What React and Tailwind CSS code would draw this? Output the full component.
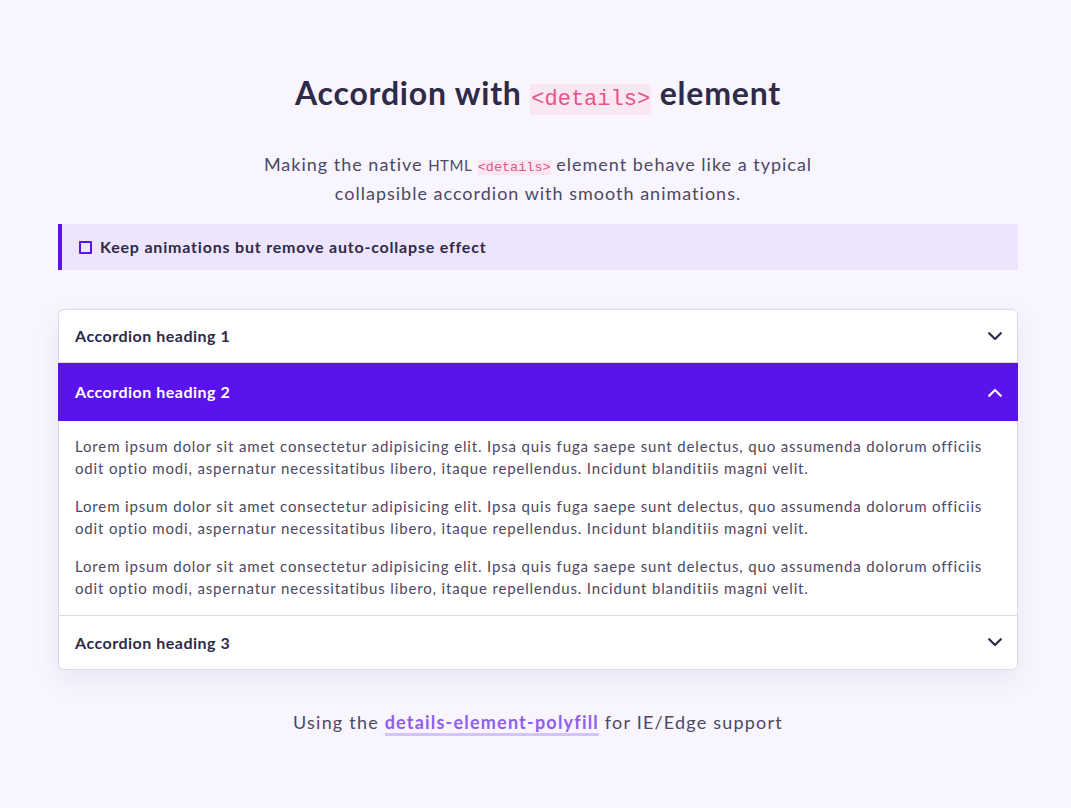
import { useState } from "react";

const lorem =
  "Lorem ipsum dolor sit amet consectetur adipisicing elit. Ipsa quis fuga saepe sunt delectus, quo assumenda dolorum officiis odit optio modi, aspernatur necessitatibus libero, itaque repellendus. Incidunt blanditiis magni velit.";

function Code({ children, className = "" }) {
  return (
    <code
      className={`bg-[#f9e7f1] text-[#e8538a] font-['Liberation_Mono','DejaVu_Sans_Mono',monospace] font-normal tracking-normal leading-none ${className}`}
    >
      {children}
    </code>
  );
}

function Chevron({ up }) {
  return (
    <svg width="14" height="9" viewBox="0 0 14 9" fill="none" className="shrink-0">
      <path
        d={up ? "M1.2 7.8 L7 2 L12.8 7.8" : "M1.2 1.2 L7 7 L12.8 1.2"}
        stroke="currentColor"
        strokeWidth="2.2"
        strokeLinecap="round"
        strokeLinejoin="round"
      />
    </svg>
  );
}

function Item({ title, open, onToggle, last }) {
  return (
    <div className={last ? "" : "border-b border-[#dcd8e6]"}>
      <button
        onClick={onToggle}
        className={`flex items-center justify-between text-left text-[16px] tracking-[0.5px] font-bold ${
          open
            ? "bg-[#5b13ec] text-white h-[58px] -mx-px w-[calc(100%+2px)] pl-[17px] pr-[16px]"
            : `w-full pl-4 pr-[15px] text-[#2e2a47] ${last ? "h-[53px]" : "h-[52px]"}`
        }`}
      >
        <span>{title}</span>
        <Chevron up={open} />
      </button>
      {open && (
        <div className="px-4 pt-[14px] pb-4 text-[15px] leading-[22px] tracking-[0.85px] text-[#4d4863] space-y-4">
          <p>{lorem}</p>
          <p>{lorem}</p>
          <p>{lorem}</p>
        </div>
      )}
    </div>
  );
}

export default function App() {
  const [openIdx, setOpenIdx] = useState(1);
  const [keep, setKeep] = useState(false);

  return (
    <div className="min-h-screen bg-[#f8f5fe] font-['Lato',sans-serif] text-[#2e2a47]">
      <div className="w-[960px] ml-[58px] pt-[72px] pb-16">
        <h1 className="text-center text-[32px] tracking-[0.8px] font-bold leading-[42px]">
          Accordion with <Code className="text-[22px] px-px py-[3px]">&lt;details&gt;</Code> element
        </h1>
        <p className="mt-[36px] text-center text-[18px] leading-[28px] tracking-[1px] text-[#4d4863] max-w-[600px] mx-auto">
          Making the native <span className="text-[15px] tracking-[0.5px]">HTML</span>{" "}
          <Code className="text-[13.5px]">&lt;details&gt;</Code> element behave like a typical
          <br />
          collapsible accordion with smooth animations.
        </p>

        <label className="mt-[17px] flex items-center gap-2 h-[46px] pl-[17px] border-l-4 border-[#5b13ec] bg-[#ede5fd] text-[16px] tracking-[0.8px] font-bold cursor-pointer">
          <span
            onClick={() => setKeep(!keep)}
            className={`w-[13px] h-[13px] border-2 border-[#5b13ec] rounded-[1px] ${keep ? "bg-[#5b13ec]" : ""}`}
          />
          Keep animations but remove auto-collapse effect
        </label>

        <div className="mt-[39px] bg-white border border-[#dcd8e6] rounded-md shadow-[0_10px_25px_rgba(80,60,140,0.08)]">
          {["Accordion heading 1", "Accordion heading 2", "Accordion heading 3"].map((t, i) => (
            <Item
              key={t}
              title={t}
              open={openIdx === i}
              last={i === 2}
              onToggle={() => setOpenIdx(openIdx === i ? -1 : i)}
            />
          ))}
        </div>

        <p className="mt-[38px] text-center text-[18px] leading-[28px] tracking-[1.2px] text-[#4d4863]">
          Using the{" "}
          <a href="#" className="font-bold text-[#8f5ef0] border-b-[3px] border-[#d4c2f8]">
            details-element-polyfill
          </a>{" "}
          for IE/Edge support
        </p>
      </div>
    </div>
  );
}
